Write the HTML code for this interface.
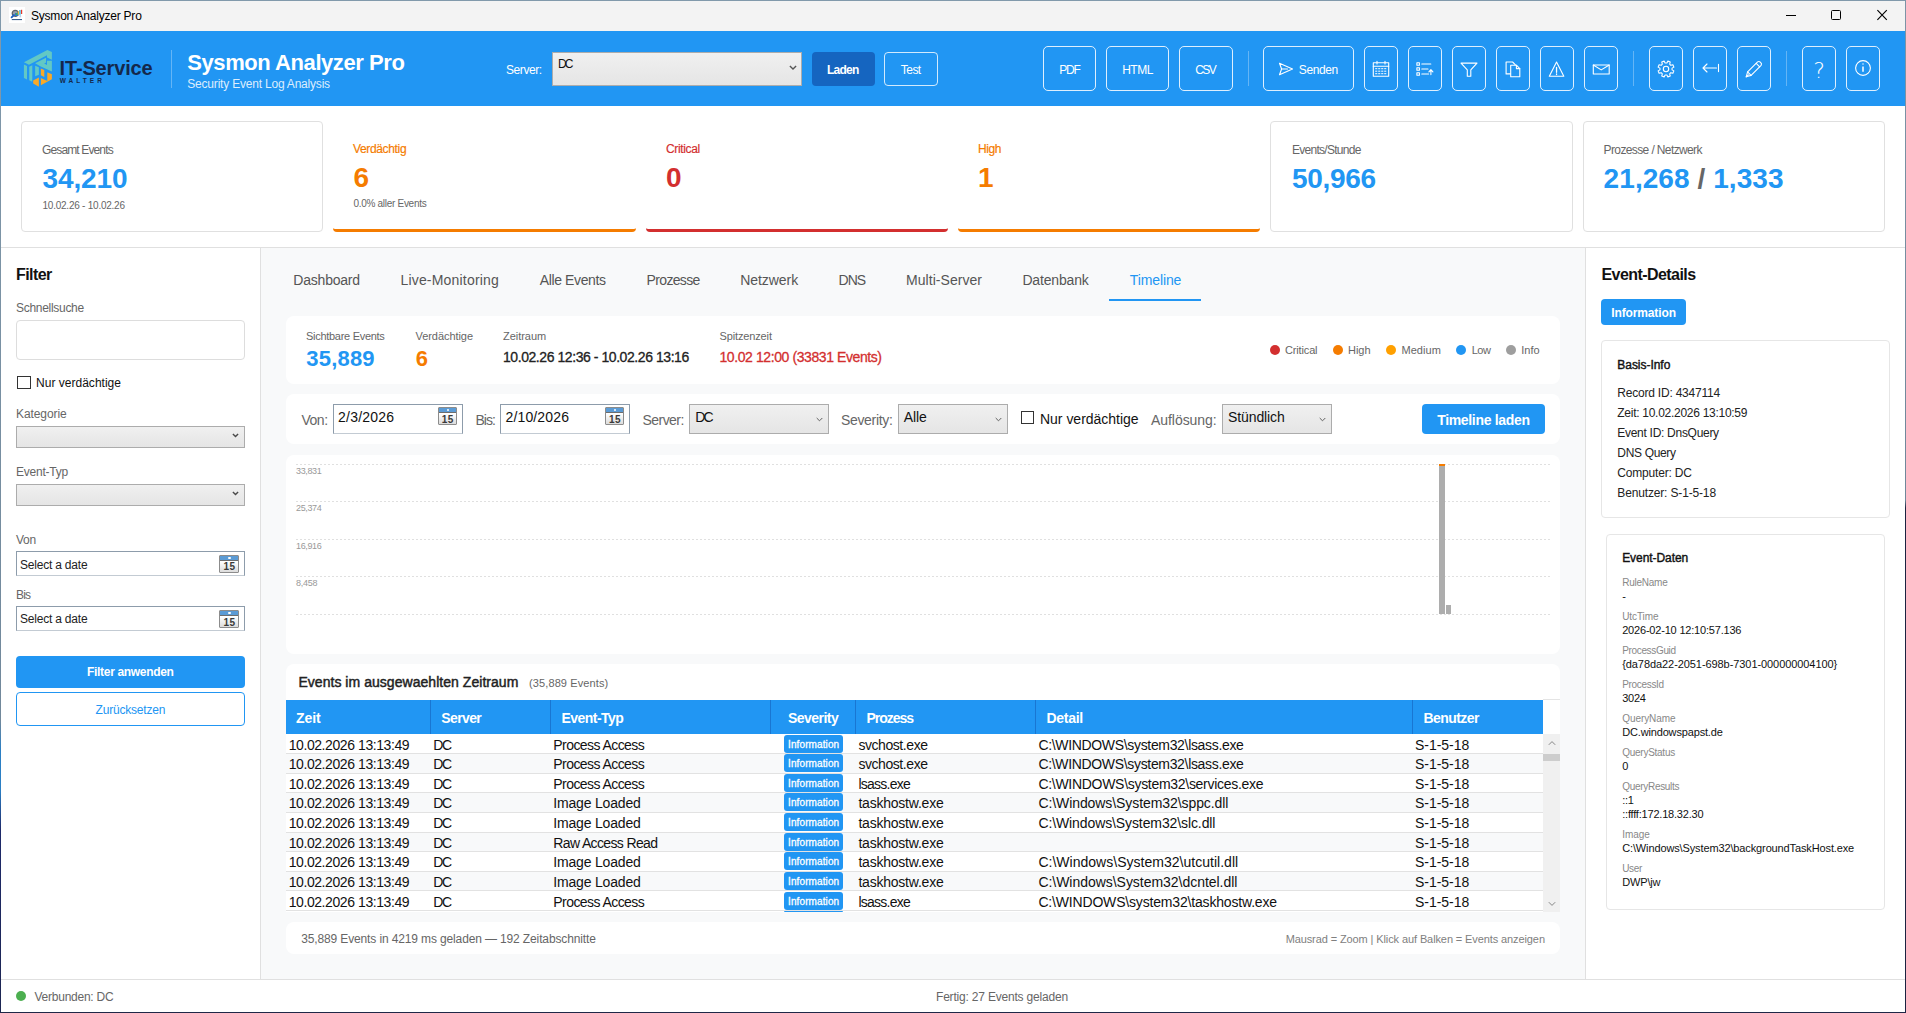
<!DOCTYPE html>
<html lang="de"><head><meta charset="utf-8"><title>Sysmon Analyzer Pro</title>
<style>
html,body{margin:0;padding:0}
body{width:1906px;height:1013px;overflow:hidden;background:#fff;font-family:"Liberation Sans",sans-serif}
#app{position:relative;width:1906px;height:1013px;overflow:hidden;background:#fff}
#app div,#app svg,#app .t{position:absolute;box-sizing:border-box}
#app .t{white-space:pre;display:block}
.combo{border:1px solid #acacac;background:linear-gradient(#f0f0f0,#e5e5e5)}
.dp{border:1px solid #8d9cab;border-bottom-color:#c3cbd3;background:#fff}
.card{background:#fff;border-radius:8px}
.hb{border:1px solid rgba(255,255,255,.85);border-radius:5px}
.cal{border:1px solid #8c8c8c;border-radius:1px;background:linear-gradient(#fff 35%,#dcdcdc)}
.cal i{position:absolute;left:0;top:0;right:0;height:4px;background:#5b9bd5;border-bottom:1px solid #6d6d6d}
.cal b{position:absolute;left:8px;top:.8px;width:2.4px;height:2.4px;border-radius:2px;background:#fff}
.cal u{position:absolute;left:1px;right:0;top:6.5px;text-align:center;font:bold 10px/10px "Liberation Sans",sans-serif;color:#3a3a3a;text-decoration:none;letter-spacing:.4px}
.badge{background:#2196F3;border-radius:3px}
.row{left:286px;width:1257px;border-bottom:1px solid #e2e2e2}
.hsep{width:1px;background:rgba(255,255,255,.3)}
</style></head>
<body>
<div id="app">
<div style="left:0px;top:0px;width:1906px;height:31px;background:#f3f3f3"></div>
<div style="left:0px;top:0px;width:1906px;height:1px;background:#8199ab"></div>
<div style="left:9px;top:7px;width:16px;height:16px;background:#fff"></div>
<svg style="left:9px;top:7px" width="16" height="16" viewBox="0 0 16 16"><circle cx="6.2" cy="6.3" r="3" fill="#9aa0a8" stroke="#5d6168" stroke-width="1.2"/><rect x="6" y="6" width="3.4" height="3" fill="#2f6fd0"/><rect x="6.8" y="6.3" width="1.6" height="1.8" fill="#36b84a"/><rect x="8.8" y="4.2" width="1.3" height="3.4" fill="#f0c040"/><rect x="10.2" y="3" width="1.5" height="4.8" fill="#46b8e0"/><rect x="12" y="2.8" width="1.2" height="4.2" fill="#e8392b"/><path d="M2.6 10.3L5 8" stroke="#1c5fc0" stroke-width="1.8" stroke-linecap="round"/><rect x="10.5" y="8" width="1.6" height="2.4" fill="#b9d4f0"/><rect x="2.8" y="12" width="10.2" height="1.1" fill="#3a5f8f"/></svg>
<svg style="left:1780px;top:5px" width="120" height="22" viewBox="0 0 120 22"><g fill="none" stroke="#000" stroke-width="1"><path d="M6 10.5H16"/><rect x="51.5" y="5.5" width="9" height="9" rx="1"/><path d="M97.4 5.2L106.8 14.8M106.8 5.2L97.4 14.8" stroke-width="1.15"/></g></svg>
<div style="left:0px;top:31px;width:1906px;height:74.6px;background:#2196F3"></div>
<svg style="left:18px;top:44px" width="48" height="48" viewBox="0 0 1013 1013"><g fill="#62c8c5"><path d="M125 385L620 125 715 170V335L612 285V240L232 437Z"/><path d="M362 405L592 290V392L552 412 612 442V352L715 352V582L470 472Z"/><path d="M125 432L190 462V748L125 716Z"/><path d="M237 478L302 448V700L300 795 237 765Z"/><path d="M362 458L440 492V650L362 682Z"/></g><g fill="#f9a927"><path d="M482 515L555 550V695L482 660Z"/><path d="M618 595L715 640V745L482 868V718L560 755 618 780Z"/><path d="M320 770L440 705V900L320 835Z"/></g><g stroke="#2196F3" stroke-width="14" fill="none"><path d="M460 720V880"/></g></svg>
<div style="left:171px;top:49.5px;width:1px;height:38.5px;background:rgba(255,255,255,.3)"></div>
<div class="combo" style="left:552px;top:52px;width:250px;height:34px"></div>
<svg style="left:788.5px;top:65px" width="8" height="6" viewBox="0 0 8 6"><path d="M.9 1L4 4 7.1 1" fill="none" stroke="#555" stroke-width="1.4"/></svg>
<div style="left:811.5px;top:52px;width:63px;height:34px;background:#1565C0;border-radius:4px"></div>
<div style="left:884px;top:52px;width:53.5px;height:34px;border:1px solid rgba(255,255,255,.8);border-radius:4px"></div>
<div class="hb" style="left:1043px;top:46px;width:53px;height:45px"></div>
<div class="hb" style="left:1106px;top:46px;width:63px;height:45px"></div>
<div class="hb" style="left:1179px;top:46px;width:54px;height:45px"></div>
<div class="hsep" style="left:1248px;top:51px;height:35px"></div>
<div class="hb" style="left:1263px;top:46px;width:91px;height:45px"></div>
<div class="hb" style="left:1364px;top:46px;width:34px;height:45px"></div>
<div class="hb" style="left:1408px;top:46px;width:34px;height:45px"></div>
<div class="hb" style="left:1452px;top:46px;width:34px;height:45px"></div>
<div class="hb" style="left:1496px;top:46px;width:34px;height:45px"></div>
<div class="hb" style="left:1540px;top:46px;width:34px;height:45px"></div>
<div class="hb" style="left:1584px;top:46px;width:34px;height:45px"></div>
<div class="hsep" style="left:1633px;top:51px;height:35px"></div>
<div class="hb" style="left:1649px;top:46px;width:34px;height:45px"></div>
<div class="hb" style="left:1693px;top:46px;width:34px;height:45px"></div>
<div class="hb" style="left:1737px;top:46px;width:34px;height:45px"></div>
<div class="hsep" style="left:1786px;top:51px;height:35px"></div>
<div class="hb" style="left:1802px;top:46px;width:34px;height:45px"></div>
<div class="hb" style="left:1846px;top:46px;width:34px;height:45px"></div>
<svg style="left:1277.0px;top:59.5px" width="18" height="18" viewBox="0 0 18 18"><g fill="none" stroke="#fff" stroke-width="1.1" stroke-linejoin="round" stroke-linecap="round"><path d="M2.5 3.2L15.5 9 2.5 14.8 4.6 9Z"/><path d="M4.6 9H10.5"/></g></svg>
<svg style="left:1372.3px;top:59.5px" width="18" height="18" viewBox="0 0 18 18"><g fill="none" stroke="#fff" stroke-width="1.1" stroke-linejoin="round" stroke-linecap="round"><rect x="1.3" y="2.8" width="15.4" height="13.4"/><path d="M1.3 6.3H16.7M5 1.2V4M13 1.2V4"/><g stroke-width="1" stroke-dasharray="1.3 1.7"><path d="M3.6 8.7H15M3.6 11.2H15M3.6 13.7H15"/></g></g></svg>
<svg style="left:1416.3px;top:59.5px" width="18" height="18" viewBox="0 0 18 18"><g fill="none" stroke="#fff" stroke-width="1.1" stroke-linejoin="round" stroke-linecap="round"><rect x="0.9" y="2.8" width="2.5" height="2.5"/><rect x="0.9" y="7.8" width="2.5" height="2.5"/><rect x="0.9" y="12.8" width="2.5" height="2.5"/><path d="M5.8 4H14.8M5.8 9H12M5.8 14H12.6M14.9 14.6V10M12.9 11.9L14.9 9.7 16.9 11.9"/></g></svg>
<svg style="left:1460.3px;top:59.5px" width="18" height="18" viewBox="0 0 18 18"><g fill="none" stroke="#fff" stroke-width="1.1" stroke-linejoin="round" stroke-linecap="round"><path d="M1 3.1H17L10.8 9.9V16.2H7.3V9.9Z"/></g></svg>
<svg style="left:1504.2px;top:59.5px" width="18" height="18" viewBox="0 0 18 18"><g fill="none" stroke="#fff" stroke-width="1.1" stroke-linejoin="round" stroke-linecap="round"><path d="M6.4 13.9H2.1V2H8.6L11.4 4.8"/><path d="M6.7 5.2H12.4L15.8 8.6V16.7H6.7Z"/><path d="M12.4 5.2V8.6H15.8"/></g></svg>
<svg style="left:1548.2px;top:59.5px" width="18" height="18" viewBox="0 0 18 18"><g fill="none" stroke="#fff" stroke-width="1.1" stroke-linejoin="round" stroke-linecap="round"><path d="M8.55 2.1L15.8 16.2H1.3Z"/><path d="M8.55 7.4V12.3M8.55 13.8V14.6" stroke-width="1.3"/></g></svg>
<svg style="left:1592.1px;top:59.5px" width="18" height="18" viewBox="0 0 18 18"><g fill="none" stroke="#fff" stroke-width="1.1" stroke-linejoin="round" stroke-linecap="round"><rect x="1.3" y="5" width="15.9" height="9"/><path d="M1.3 5L9.25 9.9 17.2 5"/></g></svg>
<svg style="left:1657.0px;top:59.900000000000006px" width="18" height="18" viewBox="0 0 18 18"><g fill="none" stroke="#fff" stroke-width="1.1" stroke-linejoin="round" stroke-linecap="round"><path d="M16.88 10.87L15.89 13.25L13.88 12.66L12.66 13.88L13.25 15.89L10.87 16.88L9.87 15.04L8.13 15.04L7.13 16.88L4.75 15.89L5.34 13.88L4.12 12.66L2.11 13.25L1.12 10.87L2.96 9.87L2.96 8.13L1.12 7.13L2.11 4.75L4.12 5.34L5.34 4.12L4.75 2.11L7.13 1.12L8.13 2.96L9.87 2.96L10.87 1.12L13.25 2.11L12.66 4.12L13.88 5.34L15.89 4.75L16.88 7.13L15.04 8.13L15.04 9.87Z"/><circle cx="9" cy="9" r="2.7"/></g></svg>
<svg style="left:1701.7px;top:59.400000000000006px" width="18" height="18" viewBox="0 0 18 18"><g fill="none" stroke="#fff" stroke-width="1.1" stroke-linejoin="round" stroke-linecap="round"><path d="M1 9H14.5M5 5L1 9 5 13M16.5 5.4V12.6"/></g></svg>
<svg style="left:1745.0px;top:59.900000000000006px" width="18" height="18" viewBox="0 0 18 18"><g fill="none" stroke="#fff" stroke-width="1.1" stroke-linejoin="round" stroke-linecap="round"><path d="M1.2 16.8L2.6 11.9 12.6 1.9Q14 0.9 15.6 2.4T16.1 5.4L6.1 15.4Z"/><path d="M2.6 11.9L6.1 15.4M11.2 3.3L14.7 6.8M1.2 16.8L3.4 14.8"/></g></svg>
<svg style="left:1853.8px;top:59.099999999999994px" width="18" height="18" viewBox="0 0 18 18"><g fill="none" stroke="#fff" stroke-width="1.1" stroke-linejoin="round" stroke-linecap="round"><circle cx="9" cy="9" r="7.4"/><path d="M9 7.6V12.7M9 4.6V5.6" stroke-width="1.5" stroke-linecap="butt"/></g></svg>
<div style="left:0px;top:105.6px;width:1906px;height:142px;background:#fff"></div>
<div style="left:21px;top:121px;width:302.4px;height:111px;border:1px solid #e0e0e0;border-radius:4px;background:#fff"></div>
<div style="left:333.3px;top:121px;width:302.4px;height:111px;border-bottom:3px solid #F57C00;border-radius:4px;background:#fff"></div>
<div style="left:645.7px;top:121px;width:302.4px;height:111px;border-bottom:3px solid #D32F2F;border-radius:4px;background:#fff"></div>
<div style="left:958px;top:121px;width:302.4px;height:111px;border-bottom:3px solid #F57C00;border-radius:4px;background:#fff"></div>
<div style="left:1270.3px;top:121px;width:302.4px;height:111px;border:1px solid #e0e0e0;border-radius:4px;background:#fff"></div>
<div style="left:1582.7px;top:121px;width:302.4px;height:111px;border:1px solid #e0e0e0;border-radius:4px;background:#fff"></div>
<div style="left:0px;top:247px;width:1906px;height:1px;background:#e0e0e0"></div>
<div style="left:261px;top:248px;width:1324px;height:731px;background:#f8f9fa"></div>
<div style="left:260px;top:248px;width:1px;height:731px;background:#e0e0e0"></div>
<div style="left:1585px;top:248px;width:1px;height:731px;background:#e0e0e0"></div>
<div style="left:0px;top:979px;width:1906px;height:1px;background:#e0e0e0"></div>
<div style="left:16px;top:320px;width:229px;height:40px;border:1px solid #ddd;border-radius:4px;background:#fff"></div>
<div style="left:17px;top:376px;width:14px;height:13px;border:1px solid #333;background:#fff"></div>
<div class="combo" style="left:16px;top:426px;width:229px;height:22px"></div>
<div class="combo" style="left:16px;top:484px;width:229px;height:22px"></div>
<svg style="left:231.5px;top:433px" width="7" height="5" viewBox="0 0 7 5"><path d="M.9 1L3.5 3.6 6.1 1" fill="none" stroke="#4a4a4a" stroke-width="1.4"/></svg>
<svg style="left:231.5px;top:491px" width="7" height="5" viewBox="0 0 7 5"><path d="M.9 1L3.5 3.6 6.1 1" fill="none" stroke="#4a4a4a" stroke-width="1.4"/></svg>
<div class="dp" style="left:16px;top:551.3px;width:229px;height:24.4px"></div>
<div class="dp" style="left:16px;top:606px;width:229px;height:24.6px"></div>
<div class="cal" style="left:219.3px;top:554.8px;width:19.5px;height:18px"><i></i><b></b><u>15</u></div>
<div class="cal" style="left:219.3px;top:610px;width:19.5px;height:18px"><i></i><b></b><u>15</u></div>
<div style="left:16px;top:656px;width:229px;height:31.5px;background:#2196F3;border-radius:4px"></div>
<div style="left:16px;top:692.4px;width:229px;height:34px;border:1px solid #2196F3;border-radius:4px;background:#fff"></div>
<div style="left:1109px;top:298.5px;width:92px;height:2px;background:#2196F3"></div>
<div class="card" style="left:286px;top:316px;width:1274px;height:67.6px"></div>
<div style="left:1269.6px;top:345px;width:10px;height:10px;background:#D32F2F;border-radius:5px"></div>
<div style="left:1332.5px;top:345px;width:10px;height:10px;background:#F57C00;border-radius:5px"></div>
<div style="left:1385.8px;top:345px;width:10px;height:10px;background:#FFA000;border-radius:5px"></div>
<div style="left:1456.3px;top:345px;width:10px;height:10px;background:#2196F3;border-radius:5px"></div>
<div style="left:1505.8px;top:345px;width:10px;height:10px;background:#9E9E9E;border-radius:5px"></div>
<div class="card" style="left:286px;top:393.6px;width:1274px;height:50.4px"></div>
<div class="dp" style="left:333px;top:404px;width:130px;height:30.3px"></div>
<div class="cal" style="left:437.5px;top:407px;width:19.5px;height:18px"><i></i><b></b><u>15</u></div>
<div class="dp" style="left:500.3px;top:404px;width:130px;height:30.3px"></div>
<div class="cal" style="left:604.8px;top:407px;width:19.5px;height:18px"><i></i><b></b><u>15</u></div>
<div class="combo" style="left:689px;top:404px;width:140px;height:30px"></div>
<div class="combo" style="left:898px;top:404px;width:110px;height:30px"></div>
<div style="left:1021px;top:411px;width:13px;height:13px;border:1px solid #333;background:#fff"></div>
<div class="combo" style="left:1222px;top:404px;width:110px;height:30px"></div>
<svg style="left:815.5px;top:416.5px" width="7" height="5" viewBox="0 0 7 5"><path d="M.7 1L3.5 3.8 6.3 1" fill="none" stroke="#606060" stroke-width="1"/></svg>
<svg style="left:994.5px;top:416.5px" width="7" height="5" viewBox="0 0 7 5"><path d="M.7 1L3.5 3.8 6.3 1" fill="none" stroke="#606060" stroke-width="1"/></svg>
<svg style="left:1318.5px;top:416.5px" width="7" height="5" viewBox="0 0 7 5"><path d="M.7 1L3.5 3.8 6.3 1" fill="none" stroke="#606060" stroke-width="1"/></svg>
<div style="left:1422px;top:404px;width:123px;height:30px;background:#2196F3;border-radius:4px"></div>
<div class="card" style="left:286px;top:454.6px;width:1274px;height:199.4px"></div>
<div style="left:296px;top:464px;width:1254.5px;height:1px;background:repeating-linear-gradient(90deg,#e0e0e0 0 2px,transparent 2px 4px)"></div>
<div style="left:296px;top:501px;width:1254.5px;height:1px;background:repeating-linear-gradient(90deg,#e0e0e0 0 2px,transparent 2px 4px)"></div>
<div style="left:296px;top:539px;width:1254.5px;height:1px;background:repeating-linear-gradient(90deg,#e0e0e0 0 2px,transparent 2px 4px)"></div>
<div style="left:296px;top:576px;width:1254.5px;height:1px;background:repeating-linear-gradient(90deg,#e0e0e0 0 2px,transparent 2px 4px)"></div>
<div style="left:296px;top:614px;width:1254.5px;height:1px;background:repeating-linear-gradient(90deg,#e0e0e0 0 2px,transparent 2px 4px)"></div>
<div style="left:1439px;top:464px;width:5.6px;height:150px;background:#adadad"></div>
<div style="left:1439px;top:464px;width:5.6px;height:1.6px;background:#F57C00"></div>
<div style="left:1445.6px;top:605px;width:5.2px;height:9px;background:#adadad"></div>
<div class="card" style="left:286px;top:664px;width:1274px;height:248px;border-radius:8px 8px 0 0"></div>
<div style="left:1543px;top:699px;width:17px;height:1px;background:#e4e4e4"></div>
<div style="left:286px;top:700px;width:1257px;height:34px;background:#2196F3"></div>
<div style="left:430px;top:700px;width:1px;height:34px;background:#1976D2"></div>
<div style="left:550px;top:700px;width:1px;height:34px;background:#1976D2"></div>
<div style="left:770px;top:700px;width:1px;height:34px;background:#1976D2"></div>
<div style="left:855px;top:700px;width:1px;height:34px;background:#1976D2"></div>
<div style="left:1035px;top:700px;width:1px;height:34px;background:#1976D2"></div>
<div style="left:1412px;top:700px;width:1px;height:34px;background:#1976D2"></div>
<div class="row" style="top:734px;height:20.0px;background:#fff"></div>
<div class="badge" style="left:784px;top:735.0px;width:59px;height:18.2px"></div>
<div class="row" style="top:754.0px;height:19.8px;background:#f8f9fa"></div>
<div class="badge" style="left:784px;top:754.0px;width:59px;height:18.2px"></div>
<div class="row" style="top:773.8000000000001px;height:19.2px;background:#fff"></div>
<div class="badge" style="left:784px;top:774.0px;width:59px;height:18.2px"></div>
<div class="row" style="top:793.0px;height:20.0px;background:#f8f9fa"></div>
<div class="badge" style="left:784px;top:793.0px;width:59px;height:18.2px"></div>
<div class="row" style="top:813.0px;height:20.0px;background:#fff"></div>
<div class="badge" style="left:784px;top:813.0px;width:59px;height:18.2px"></div>
<div class="row" style="top:833.0px;height:19.2px;background:#f8f9fa"></div>
<div class="badge" style="left:784px;top:833.0px;width:59px;height:18.2px"></div>
<div class="row" style="top:852.2px;height:19.7px;background:#fff"></div>
<div class="badge" style="left:784px;top:852.0px;width:59px;height:18.2px"></div>
<div class="row" style="top:871.9px;height:19.2px;background:#f8f9fa"></div>
<div class="badge" style="left:784px;top:872.0px;width:59px;height:18.2px"></div>
<div class="row" style="top:891.1px;height:19.8px;background:#fff"></div>
<div class="badge" style="left:784px;top:892.0px;width:59px;height:18.2px"></div>
<div class="badge" style="left:784px;top:911px;width:59px;height:1px;border-radius:3px 3px 0 0"></div>
<div style="left:1543px;top:734px;width:17px;height:178px;background:#f0f0f0"></div>
<div style="left:1543px;top:753.7px;width:17px;height:7.5px;background:#cdcdcd"></div>
<svg style="left:1547.5px;top:740px" width="8" height="6" viewBox="0 0 8 6"><path d="M.8 4.8L4 1.6 7.2 4.8" fill="none" stroke="#858585" stroke-width="1"/></svg>
<svg style="left:1547.5px;top:901px" width="8" height="6" viewBox="0 0 8 6"><path d="M.8 1.2L4 4.4 7.2 1.2" fill="none" stroke="#858585" stroke-width="1"/></svg>
<div class="card" style="left:286px;top:922px;width:1274px;height:31.5px"></div>
<div style="left:1586px;top:248px;width:319px;height:731px;background:#fff"></div>
<div style="left:1601px;top:299px;width:85px;height:26px;background:#2196F3;border-radius:4px"></div>
<div style="left:1601.3px;top:340.4px;width:288.3px;height:177.6px;border:1px solid #e6e6e6;border-radius:4px;background:#fff"></div>
<div style="left:1606.4px;top:533.8px;width:278.4px;height:376.4px;border:1px solid #e6e6e6;border-radius:4px;background:#fff"></div>
<div style="left:16px;top:991px;width:10px;height:10px;background:#4CAF50;border-radius:5px"></div>
<div style="left:0px;top:0px;width:1px;height:1013px;background:linear-gradient(#8199ab 0,#71889b 720px,#2b7fc4 750px,#2b7fc4 790px,#1e2a6a 830px,#1d2652 1013px)"></div>
<div style="left:1905px;top:0px;width:1px;height:1013px;background:linear-gradient(#7d94a6 0,#70879a 500px,#1c2340 508px,#1c2340 1013px)"></div>
<div style="left:0px;top:1012px;width:1906px;height:1px;background:#1f2747"></div>
<span class="t" style="left:31.00px;top:10.00px;font-size:12px;line-height:12px;color:#000;letter-spacing:-0.217px;">Sysmon Analyzer Pro</span>
<span class="t" style="left:59.60px;top:58.00px;font-size:20px;line-height:20px;color:#14284b;font-weight:700;letter-spacing:-0.160px;">IT-Service</span>
<span class="t" style="left:59.80px;top:78.00px;font-size:6.5px;line-height:6.5px;color:#14284b;font-weight:700;letter-spacing:3.024px;">WALTER</span>
<span class="t" style="left:187.30px;top:52.00px;font-size:22px;line-height:22px;color:#fff;font-weight:700;letter-spacing:-0.436px;">Sysmon Analyzer Pro</span>
<span class="t" style="left:187.30px;top:78.00px;font-size:12px;line-height:12px;color:rgba(255,255,255,.85);letter-spacing:-0.203px;">Security Event Log Analysis</span>
<span class="t" style="left:506.00px;top:64.00px;font-size:12px;line-height:12px;color:#fff;letter-spacing:-0.413px;">Server:</span>
<span class="t" style="left:558.00px;top:58.00px;font-size:12px;line-height:12px;color:#111;letter-spacing:-1.896px;">DC</span>
<span class="t" style="left:827.01px;top:64.00px;font-size:12px;line-height:12px;color:#fff;font-weight:700;letter-spacing:-0.743px;">Laden</span>
<span class="t" style="left:900.86px;top:64.00px;font-size:12px;line-height:12px;color:#fff;letter-spacing:-0.576px;">Test</span>
<span class="t" style="left:1059.20px;top:64.00px;font-size:12px;line-height:12px;color:#fff;letter-spacing:-1.200px;">PDF</span>
<span class="t" style="left:1122.18px;top:64.00px;font-size:12px;line-height:12px;color:#fff;letter-spacing:-0.478px;">HTML</span>
<span class="t" style="left:1195.21px;top:64.00px;font-size:12px;line-height:12px;color:#fff;letter-spacing:-1.555px;">CSV</span>
<span class="t" style="left:1298.80px;top:64.00px;font-size:12px;line-height:12px;color:#fff;letter-spacing:-0.395px;">Senden</span>
<span class="t" style="left:1813.16px;top:60.00px;font-size:22px;line-height:22px;color:#fff;font-family:'DejaVu Sans Light','DejaVu Sans',sans-serif;font-weight:200;">?</span>
<span class="t" style="left:42.00px;top:144.00px;font-size:12px;line-height:12px;color:#666;letter-spacing:-0.866px;">Gesamt Events</span>
<span class="t" style="left:42.50px;top:165.00px;font-size:28px;line-height:28px;color:#2196F3;font-weight:700;letter-spacing:-0.116px;">34,210</span>
<span class="t" style="left:42.50px;top:201.00px;font-size:10px;line-height:10px;color:#666;letter-spacing:-0.235px;">10.02.26 - 10.02.26</span>
<span class="t" style="left:353.00px;top:143.00px;font-size:12px;line-height:12px;color:#F57C00;letter-spacing:-0.349px;-webkit-text-stroke:.18px #F57C00;">Verdächtig</span>
<span class="t" style="left:353.50px;top:164.00px;font-size:28px;line-height:28px;color:#F57C00;font-weight:700;">6</span>
<span class="t" style="left:353.50px;top:199.00px;font-size:10px;line-height:10px;color:#666;letter-spacing:-0.293px;">0.0% aller Events</span>
<span class="t" style="left:666.00px;top:143.00px;font-size:12px;line-height:12px;color:#D32F2F;letter-spacing:-0.356px;-webkit-text-stroke:.18px #D32F2F;">Critical</span>
<span class="t" style="left:666.00px;top:164.00px;font-size:28px;line-height:28px;color:#D32F2F;font-weight:700;">0</span>
<span class="t" style="left:978.00px;top:143.00px;font-size:12px;line-height:12px;color:#F57C00;letter-spacing:-0.396px;-webkit-text-stroke:.18px #F57C00;">High</span>
<span class="t" style="left:978.00px;top:164.00px;font-size:28px;line-height:28px;color:#F57C00;font-weight:700;">1</span>
<span class="t" style="left:1292.00px;top:144.00px;font-size:12px;line-height:12px;color:#666;letter-spacing:-0.725px;">Events/Stunde</span>
<span class="t" style="left:1292.00px;top:165.00px;font-size:28px;line-height:28px;color:#2196F3;font-weight:700;letter-spacing:-0.298px;">50,966</span>
<span class="t" style="left:1603.60px;top:144.00px;font-size:12px;line-height:12px;color:#666;letter-spacing:-0.619px;">Prozesse / Netzwerk</span>
<span class="t" style="left:1603.60px;top:165.00px;font-size:28px;line-height:28px;color:#2196F3;font-weight:700;letter-spacing:0.069px;">21,268 <span style="color:#666">/</span> 1,333</span>
<span class="t" style="left:16.00px;top:267.00px;font-size:16px;line-height:16px;color:#111;font-weight:700;letter-spacing:-0.568px;">Filter</span>
<span class="t" style="left:16.00px;top:302.00px;font-size:12px;line-height:12px;color:#666;letter-spacing:-0.295px;">Schnellsuche</span>
<span class="t" style="left:36.00px;top:377.00px;font-size:12px;line-height:12px;color:#111;letter-spacing:0.019px;">Nur verdächtige</span>
<span class="t" style="left:16.00px;top:408.00px;font-size:12px;line-height:12px;color:#666;letter-spacing:-0.079px;">Kategorie</span>
<span class="t" style="left:16.00px;top:466.00px;font-size:12px;line-height:12px;color:#666;letter-spacing:-0.239px;">Event-Typ</span>
<span class="t" style="left:16.00px;top:534.00px;font-size:12px;line-height:12px;color:#666;letter-spacing:-0.281px;">Von</span>
<span class="t" style="left:20.00px;top:559.00px;font-size:12px;line-height:12px;color:#222;letter-spacing:-0.205px;">Select a date</span>
<span class="t" style="left:16.00px;top:589.00px;font-size:12px;line-height:12px;color:#666;letter-spacing:-0.869px;">Bis</span>
<span class="t" style="left:20.00px;top:613.00px;font-size:12px;line-height:12px;color:#222;letter-spacing:-0.205px;">Select a date</span>
<span class="t" style="left:87.07px;top:666.00px;font-size:12px;line-height:12px;color:#fff;font-weight:700;letter-spacing:-0.321px;">Filter anwenden</span>
<span class="t" style="left:95.60px;top:704.00px;font-size:12px;line-height:12px;color:#2196F3;letter-spacing:-0.203px;">Zurücksetzen</span>
<span class="t" style="left:293.30px;top:273.00px;font-size:14px;line-height:14px;color:#555;letter-spacing:-0.212px;">Dashboard</span>
<span class="t" style="left:400.40px;top:273.00px;font-size:14px;line-height:14px;color:#555;letter-spacing:0.199px;">Live-Monitoring</span>
<span class="t" style="left:539.70px;top:273.00px;font-size:14px;line-height:14px;color:#555;letter-spacing:-0.366px;">Alle Events</span>
<span class="t" style="left:646.60px;top:273.00px;font-size:14px;line-height:14px;color:#555;letter-spacing:-0.661px;">Prozesse</span>
<span class="t" style="left:740.20px;top:273.00px;font-size:14px;line-height:14px;color:#555;letter-spacing:-0.048px;">Netzwerk</span>
<span class="t" style="left:838.60px;top:273.00px;font-size:14px;line-height:14px;color:#555;letter-spacing:-1.025px;">DNS</span>
<span class="t" style="left:906.00px;top:273.00px;font-size:14px;line-height:14px;color:#555;letter-spacing:0.046px;">Multi-Server</span>
<span class="t" style="left:1022.40px;top:273.00px;font-size:14px;line-height:14px;color:#555;letter-spacing:-0.155px;">Datenbank</span>
<span class="t" style="left:1129.80px;top:273.00px;font-size:14px;line-height:14px;color:#2196F3;letter-spacing:-0.119px;">Timeline</span>
<span class="t" style="left:306.00px;top:331.00px;font-size:11px;line-height:11px;color:#666;letter-spacing:-0.287px;">Sichtbare Events</span>
<span class="t" style="left:306.30px;top:348.00px;font-size:22px;line-height:22px;color:#2196F3;font-weight:700;letter-spacing:0.201px;">35,889</span>
<span class="t" style="left:415.50px;top:331.00px;font-size:11px;line-height:11px;color:#666;letter-spacing:-0.058px;">Verdächtige</span>
<span class="t" style="left:415.80px;top:348.00px;font-size:22px;line-height:22px;color:#F57C00;font-weight:700;">6</span>
<span class="t" style="left:503.00px;top:331.00px;font-size:11px;line-height:11px;color:#666;letter-spacing:-0.027px;">Zeitraum</span>
<span class="t" style="left:503.00px;top:350.00px;font-size:14px;line-height:14px;color:#222;letter-spacing:-0.435px;-webkit-text-stroke:.3px #222;">10.02.26 12:36 - 10.02.26 13:16</span>
<span class="t" style="left:719.50px;top:331.00px;font-size:11px;line-height:11px;color:#666;letter-spacing:-0.135px;">Spitzenzeit</span>
<span class="t" style="left:719.50px;top:350.00px;font-size:14px;line-height:14px;color:#D32F2F;letter-spacing:-0.412px;-webkit-text-stroke:.3px #D32F2F;">10.02 12:00 (33831 Events)</span>
<span class="t" style="left:1285.00px;top:345.00px;font-size:11px;line-height:11px;color:#666;letter-spacing:-0.150px;">Critical</span>
<span class="t" style="left:1348.00px;top:345.00px;font-size:11px;line-height:11px;color:#666;letter-spacing:-0.036px;">High</span>
<span class="t" style="left:1401.40px;top:345.00px;font-size:11px;line-height:11px;color:#666;letter-spacing:0.086px;">Medium</span>
<span class="t" style="left:1471.70px;top:345.00px;font-size:11px;line-height:11px;color:#666;letter-spacing:-0.475px;">Low</span>
<span class="t" style="left:1521.30px;top:345.00px;font-size:11px;line-height:11px;color:#666;letter-spacing:0.012px;">Info</span>
<span class="t" style="left:301.40px;top:413.00px;font-size:14px;line-height:14px;color:#666;letter-spacing:-0.438px;">Von:</span>
<span class="t" style="left:338.00px;top:410.00px;font-size:14px;line-height:14px;color:#111;letter-spacing:0.227px;">2/3/2026</span>
<span class="t" style="left:475.40px;top:413.00px;font-size:14px;line-height:14px;color:#666;letter-spacing:-0.955px;">Bis:</span>
<span class="t" style="left:505.50px;top:410.00px;font-size:14px;line-height:14px;color:#111;letter-spacing:0.142px;">2/10/2026</span>
<span class="t" style="left:642.60px;top:413.00px;font-size:14px;line-height:14px;color:#666;letter-spacing:-0.573px;">Server:</span>
<span class="t" style="left:695.30px;top:410.00px;font-size:14px;line-height:14px;color:#111;letter-spacing:-1.823px;">DC</span>
<span class="t" style="left:841.00px;top:413.00px;font-size:14px;line-height:14px;color:#666;letter-spacing:-0.337px;">Severity:</span>
<span class="t" style="left:903.80px;top:410.00px;font-size:14px;line-height:14px;color:#111;letter-spacing:-0.103px;">Alle</span>
<span class="t" style="left:1040.00px;top:412.00px;font-size:14px;line-height:14px;color:#111;letter-spacing:-0.016px;">Nur verdächtige</span>
<span class="t" style="left:1151.00px;top:413.00px;font-size:14px;line-height:14px;color:#666;letter-spacing:-0.050px;">Auflösung:</span>
<span class="t" style="left:1228.00px;top:410.00px;font-size:14px;line-height:14px;color:#111;letter-spacing:-0.105px;">Stündlich</span>
<span class="t" style="left:1437.17px;top:413.00px;font-size:14px;line-height:14px;color:#fff;font-weight:700;letter-spacing:-0.319px;">Timeline laden</span>
<span class="t" style="left:296.00px;top:467.00px;font-size:9px;line-height:9px;color:#999;letter-spacing:-0.351px;">33,831</span>
<span class="t" style="left:296.00px;top:504.00px;font-size:9px;line-height:9px;color:#999;letter-spacing:-0.351px;">25,374</span>
<span class="t" style="left:296.00px;top:542.00px;font-size:9px;line-height:9px;color:#999;letter-spacing:-0.351px;">16,916</span>
<span class="t" style="left:296.00px;top:579.00px;font-size:9px;line-height:9px;color:#999;letter-spacing:-0.274px;">8,458</span>
<span class="t" style="left:298.40px;top:675.00px;font-size:14px;line-height:14px;color:#222;letter-spacing:0.042px;-webkit-text-stroke:.45px #222;">Events im ausgewaehlten Zeitraum</span>
<span class="t" style="left:529.00px;top:678.00px;font-size:11px;line-height:11px;color:#666;letter-spacing:0.113px;">(35,889 Events)</span>
<span class="t" style="left:296.00px;top:711.00px;font-size:14px;line-height:14px;color:#fff;font-weight:700;letter-spacing:-0.054px;">Zeit</span>
<span class="t" style="left:441.30px;top:711.00px;font-size:14px;line-height:14px;color:#fff;font-weight:700;letter-spacing:-0.617px;">Server</span>
<span class="t" style="left:561.50px;top:711.00px;font-size:14px;line-height:14px;color:#fff;font-weight:700;letter-spacing:-0.546px;">Event-Typ</span>
<span class="t" style="left:788.00px;top:711.00px;font-size:14px;line-height:14px;color:#fff;font-weight:700;letter-spacing:-0.531px;">Severity</span>
<span class="t" style="left:866.40px;top:711.00px;font-size:14px;line-height:14px;color:#fff;font-weight:700;letter-spacing:-1.000px;">Prozess</span>
<span class="t" style="left:1046.40px;top:711.00px;font-size:14px;line-height:14px;color:#fff;font-weight:700;letter-spacing:-0.259px;">Detail</span>
<span class="t" style="left:1423.50px;top:711.00px;font-size:14px;line-height:14px;color:#fff;font-weight:700;letter-spacing:-0.561px;">Benutzer</span>
<span class="t" style="left:288.70px;top:738.00px;font-size:14px;line-height:14px;color:#111;letter-spacing:-0.420px;">10.02.2026 13:13:49</span>
<span class="t" style="left:433.30px;top:738.00px;font-size:14px;line-height:14px;color:#111;letter-spacing:-1.490px;">DC</span>
<span class="t" style="left:553.30px;top:738.00px;font-size:14px;line-height:14px;color:#111;letter-spacing:-0.565px;">Process Access</span>
<span class="t" style="left:788.03px;top:740.00px;font-size:10px;line-height:10px;color:#fff;letter-spacing:0.111px;-webkit-text-stroke:.3px #fff;">Information</span>
<span class="t" style="left:858.40px;top:738.00px;font-size:14px;line-height:14px;color:#111;letter-spacing:-0.432px;">svchost.exe</span>
<span class="t" style="left:1038.40px;top:738.00px;font-size:14px;line-height:14px;color:#111;letter-spacing:-0.330px;">C:\WINDOWS\system32\lsass.exe</span>
<span class="t" style="left:1415.00px;top:738.00px;font-size:14px;line-height:14px;color:#111;letter-spacing:-0.036px;">S-1-5-18</span>
<span class="t" style="left:288.70px;top:757.00px;font-size:14px;line-height:14px;color:#111;letter-spacing:-0.420px;">10.02.2026 13:13:49</span>
<span class="t" style="left:433.30px;top:757.00px;font-size:14px;line-height:14px;color:#111;letter-spacing:-1.490px;">DC</span>
<span class="t" style="left:553.30px;top:757.00px;font-size:14px;line-height:14px;color:#111;letter-spacing:-0.565px;">Process Access</span>
<span class="t" style="left:788.03px;top:759.00px;font-size:10px;line-height:10px;color:#fff;letter-spacing:0.111px;-webkit-text-stroke:.3px #fff;">Information</span>
<span class="t" style="left:858.40px;top:757.00px;font-size:14px;line-height:14px;color:#111;letter-spacing:-0.432px;">svchost.exe</span>
<span class="t" style="left:1038.40px;top:757.00px;font-size:14px;line-height:14px;color:#111;letter-spacing:-0.330px;">C:\WINDOWS\system32\lsass.exe</span>
<span class="t" style="left:1415.00px;top:757.00px;font-size:14px;line-height:14px;color:#111;letter-spacing:-0.036px;">S-1-5-18</span>
<span class="t" style="left:288.70px;top:777.00px;font-size:14px;line-height:14px;color:#111;letter-spacing:-0.420px;">10.02.2026 13:13:49</span>
<span class="t" style="left:433.30px;top:777.00px;font-size:14px;line-height:14px;color:#111;letter-spacing:-1.490px;">DC</span>
<span class="t" style="left:553.30px;top:777.00px;font-size:14px;line-height:14px;color:#111;letter-spacing:-0.565px;">Process Access</span>
<span class="t" style="left:788.03px;top:779.00px;font-size:10px;line-height:10px;color:#fff;letter-spacing:0.111px;-webkit-text-stroke:.3px #fff;">Information</span>
<span class="t" style="left:858.40px;top:777.00px;font-size:14px;line-height:14px;color:#111;letter-spacing:-0.748px;">lsass.exe</span>
<span class="t" style="left:1038.40px;top:777.00px;font-size:14px;line-height:14px;color:#111;letter-spacing:-0.291px;">C:\WINDOWS\system32\services.exe</span>
<span class="t" style="left:1415.00px;top:777.00px;font-size:14px;line-height:14px;color:#111;letter-spacing:-0.036px;">S-1-5-18</span>
<span class="t" style="left:288.70px;top:796.00px;font-size:14px;line-height:14px;color:#111;letter-spacing:-0.420px;">10.02.2026 13:13:49</span>
<span class="t" style="left:433.30px;top:796.00px;font-size:14px;line-height:14px;color:#111;letter-spacing:-1.490px;">DC</span>
<span class="t" style="left:553.30px;top:796.00px;font-size:14px;line-height:14px;color:#111;letter-spacing:-0.185px;">Image Loaded</span>
<span class="t" style="left:788.03px;top:798.00px;font-size:10px;line-height:10px;color:#fff;letter-spacing:0.111px;-webkit-text-stroke:.3px #fff;">Information</span>
<span class="t" style="left:858.40px;top:796.00px;font-size:14px;line-height:14px;color:#111;letter-spacing:-0.219px;">taskhostw.exe</span>
<span class="t" style="left:1038.40px;top:796.00px;font-size:14px;line-height:14px;color:#111;letter-spacing:-0.080px;">C:\Windows\System32\sppc.dll</span>
<span class="t" style="left:1415.00px;top:796.00px;font-size:14px;line-height:14px;color:#111;letter-spacing:-0.036px;">S-1-5-18</span>
<span class="t" style="left:288.70px;top:816.00px;font-size:14px;line-height:14px;color:#111;letter-spacing:-0.420px;">10.02.2026 13:13:49</span>
<span class="t" style="left:433.30px;top:816.00px;font-size:14px;line-height:14px;color:#111;letter-spacing:-1.490px;">DC</span>
<span class="t" style="left:553.30px;top:816.00px;font-size:14px;line-height:14px;color:#111;letter-spacing:-0.185px;">Image Loaded</span>
<span class="t" style="left:788.03px;top:818.00px;font-size:10px;line-height:10px;color:#fff;letter-spacing:0.111px;-webkit-text-stroke:.3px #fff;">Information</span>
<span class="t" style="left:858.40px;top:816.00px;font-size:14px;line-height:14px;color:#111;letter-spacing:-0.219px;">taskhostw.exe</span>
<span class="t" style="left:1038.40px;top:816.00px;font-size:14px;line-height:14px;color:#111;letter-spacing:-0.103px;">C:\Windows\System32\slc.dll</span>
<span class="t" style="left:1415.00px;top:816.00px;font-size:14px;line-height:14px;color:#111;letter-spacing:-0.036px;">S-1-5-18</span>
<span class="t" style="left:288.70px;top:836.00px;font-size:14px;line-height:14px;color:#111;letter-spacing:-0.420px;">10.02.2026 13:13:49</span>
<span class="t" style="left:433.30px;top:836.00px;font-size:14px;line-height:14px;color:#111;letter-spacing:-1.490px;">DC</span>
<span class="t" style="left:553.30px;top:836.00px;font-size:14px;line-height:14px;color:#111;letter-spacing:-0.635px;">Raw Access Read</span>
<span class="t" style="left:788.03px;top:838.00px;font-size:10px;line-height:10px;color:#fff;letter-spacing:0.111px;-webkit-text-stroke:.3px #fff;">Information</span>
<span class="t" style="left:858.40px;top:836.00px;font-size:14px;line-height:14px;color:#111;letter-spacing:-0.219px;">taskhostw.exe</span>
<span class="t" style="left:1415.00px;top:836.00px;font-size:14px;line-height:14px;color:#111;letter-spacing:-0.036px;">S-1-5-18</span>
<span class="t" style="left:288.70px;top:855.00px;font-size:14px;line-height:14px;color:#111;letter-spacing:-0.420px;">10.02.2026 13:13:49</span>
<span class="t" style="left:433.30px;top:855.00px;font-size:14px;line-height:14px;color:#111;letter-spacing:-1.490px;">DC</span>
<span class="t" style="left:553.30px;top:855.00px;font-size:14px;line-height:14px;color:#111;letter-spacing:-0.185px;">Image Loaded</span>
<span class="t" style="left:788.03px;top:857.00px;font-size:10px;line-height:10px;color:#fff;letter-spacing:0.111px;-webkit-text-stroke:.3px #fff;">Information</span>
<span class="t" style="left:858.40px;top:855.00px;font-size:14px;line-height:14px;color:#111;letter-spacing:-0.219px;">taskhostw.exe</span>
<span class="t" style="left:1038.40px;top:855.00px;font-size:14px;line-height:14px;color:#111;letter-spacing:0.020px;">C:\Windows\System32\utcutil.dll</span>
<span class="t" style="left:1415.00px;top:855.00px;font-size:14px;line-height:14px;color:#111;letter-spacing:-0.036px;">S-1-5-18</span>
<span class="t" style="left:288.70px;top:875.00px;font-size:14px;line-height:14px;color:#111;letter-spacing:-0.420px;">10.02.2026 13:13:49</span>
<span class="t" style="left:433.30px;top:875.00px;font-size:14px;line-height:14px;color:#111;letter-spacing:-1.490px;">DC</span>
<span class="t" style="left:553.30px;top:875.00px;font-size:14px;line-height:14px;color:#111;letter-spacing:-0.185px;">Image Loaded</span>
<span class="t" style="left:788.03px;top:877.00px;font-size:10px;line-height:10px;color:#fff;letter-spacing:0.111px;-webkit-text-stroke:.3px #fff;">Information</span>
<span class="t" style="left:858.40px;top:875.00px;font-size:14px;line-height:14px;color:#111;letter-spacing:-0.219px;">taskhostw.exe</span>
<span class="t" style="left:1038.40px;top:875.00px;font-size:14px;line-height:14px;color:#111;letter-spacing:-0.033px;">C:\Windows\System32\dcntel.dll</span>
<span class="t" style="left:1415.00px;top:875.00px;font-size:14px;line-height:14px;color:#111;letter-spacing:-0.036px;">S-1-5-18</span>
<span class="t" style="left:288.70px;top:895.00px;font-size:14px;line-height:14px;color:#111;letter-spacing:-0.420px;">10.02.2026 13:13:49</span>
<span class="t" style="left:433.30px;top:895.00px;font-size:14px;line-height:14px;color:#111;letter-spacing:-1.490px;">DC</span>
<span class="t" style="left:553.30px;top:895.00px;font-size:14px;line-height:14px;color:#111;letter-spacing:-0.565px;">Process Access</span>
<span class="t" style="left:788.03px;top:897.00px;font-size:10px;line-height:10px;color:#fff;letter-spacing:0.111px;-webkit-text-stroke:.3px #fff;">Information</span>
<span class="t" style="left:858.40px;top:895.00px;font-size:14px;line-height:14px;color:#111;letter-spacing:-0.748px;">lsass.exe</span>
<span class="t" style="left:1038.40px;top:895.00px;font-size:14px;line-height:14px;color:#111;letter-spacing:-0.175px;">C:\WINDOWS\system32\taskhostw.exe</span>
<span class="t" style="left:1415.00px;top:895.00px;font-size:14px;line-height:14px;color:#111;letter-spacing:-0.036px;">S-1-5-18</span>
<span class="t" style="left:301.20px;top:933.00px;font-size:12px;line-height:12px;color:#666;letter-spacing:-0.132px;">35,889 Events in 4219 ms geladen — 192 Zeitabschnitte</span>
<span class="t" style="left:1285.65px;top:934.00px;font-size:11px;line-height:11px;color:#808080;letter-spacing:-0.104px;">Mausrad = Zoom | Klick auf Balken = Events anzeigen</span>
<span class="t" style="left:1601.50px;top:267.00px;font-size:16px;line-height:16px;color:#111;font-weight:700;letter-spacing:-0.566px;">Event-Details</span>
<span class="t" style="left:1611.22px;top:307.00px;font-size:12px;line-height:12px;color:#fff;font-weight:700;letter-spacing:-0.124px;">Information</span>
<span class="t" style="left:1617.30px;top:359.00px;font-size:12px;line-height:12px;color:#111;letter-spacing:-0.038px;-webkit-text-stroke:.4px #111;">Basis-Info</span>
<span class="t" style="left:1617.30px;top:387.00px;font-size:12px;line-height:12px;color:#222;letter-spacing:-0.212px;">Record ID: 4347114</span>
<span class="t" style="left:1617.30px;top:407.00px;font-size:12px;line-height:12px;color:#222;letter-spacing:-0.277px;">Zeit: 10.02.2026 13:10:59</span>
<span class="t" style="left:1617.30px;top:427.00px;font-size:12px;line-height:12px;color:#222;letter-spacing:-0.287px;">Event ID: DnsQuery</span>
<span class="t" style="left:1617.30px;top:447.00px;font-size:12px;line-height:12px;color:#222;letter-spacing:-0.325px;">DNS Query</span>
<span class="t" style="left:1617.30px;top:467.00px;font-size:12px;line-height:12px;color:#222;letter-spacing:-0.182px;">Computer: DC</span>
<span class="t" style="left:1617.30px;top:487.00px;font-size:12px;line-height:12px;color:#222;letter-spacing:-0.154px;">Benutzer: S-1-5-18</span>
<span class="t" style="left:1622.20px;top:552.00px;font-size:12px;line-height:12px;color:#111;letter-spacing:-0.067px;-webkit-text-stroke:.4px #111;">Event-Daten</span>
<span class="t" style="left:1622.20px;top:578.00px;font-size:10px;line-height:10px;color:#888;letter-spacing:-0.247px;">RuleName</span>
<span class="t" style="left:1622.20px;top:591.00px;font-size:11px;line-height:11px;color:#111;">-</span>
<span class="t" style="left:1622.20px;top:612.00px;font-size:10px;line-height:10px;color:#888;letter-spacing:-0.086px;">UtcTime</span>
<span class="t" style="left:1622.20px;top:625.00px;font-size:11px;line-height:11px;color:#111;letter-spacing:-0.194px;">2026-02-10 12:10:57.136</span>
<span class="t" style="left:1622.20px;top:646.00px;font-size:10px;line-height:10px;color:#888;letter-spacing:-0.338px;">ProcessGuid</span>
<span class="t" style="left:1622.20px;top:659.00px;font-size:11px;line-height:11px;color:#111;letter-spacing:-0.074px;">{da78da22-2051-698b-7301-000000004100}</span>
<span class="t" style="left:1622.20px;top:680.00px;font-size:10px;line-height:10px;color:#888;letter-spacing:-0.314px;">ProcessId</span>
<span class="t" style="left:1622.20px;top:693.00px;font-size:11px;line-height:11px;color:#111;letter-spacing:-0.224px;">3024</span>
<span class="t" style="left:1622.20px;top:714.00px;font-size:10px;line-height:10px;color:#888;letter-spacing:-0.071px;">QueryName</span>
<span class="t" style="left:1622.20px;top:727.00px;font-size:11px;line-height:11px;color:#111;letter-spacing:-0.157px;">DC.windowspapst.de</span>
<span class="t" style="left:1622.20px;top:748.00px;font-size:10px;line-height:10px;color:#888;letter-spacing:-0.257px;">QueryStatus</span>
<span class="t" style="left:1622.20px;top:761.00px;font-size:11px;line-height:11px;color:#111;">0</span>
<span class="t" style="left:1622.20px;top:782.00px;font-size:10px;line-height:10px;color:#888;letter-spacing:-0.294px;">QueryResults</span>
<span class="t" style="left:1622.20px;top:795.00px;font-size:11px;line-height:11px;color:#111;letter-spacing:-0.245px;">::1</span>
<span class="t" style="left:1622.20px;top:809.00px;font-size:11px;line-height:11px;color:#111;letter-spacing:-0.202px;">::ffff:172.18.32.30</span>
<span class="t" style="left:1622.20px;top:830.00px;font-size:10px;line-height:10px;color:#888;letter-spacing:-0.044px;">Image</span>
<span class="t" style="left:1622.20px;top:843.00px;font-size:11px;line-height:11px;color:#111;letter-spacing:-0.126px;">C:\Windows\System32\backgroundTaskHost.exe</span>
<span class="t" style="left:1622.20px;top:864.00px;font-size:10px;line-height:10px;color:#888;letter-spacing:-0.302px;">User</span>
<span class="t" style="left:1622.20px;top:877.00px;font-size:11px;line-height:11px;color:#111;letter-spacing:-0.147px;">DWP\jw</span>
<span class="t" style="left:34.50px;top:991.00px;font-size:12px;line-height:12px;color:#666;letter-spacing:-0.245px;">Verbunden: DC</span>
<span class="t" style="left:936.00px;top:991.00px;font-size:12px;line-height:12px;color:#666;letter-spacing:-0.195px;">Fertig: 27 Events geladen</span>
</div>
</body></html>
